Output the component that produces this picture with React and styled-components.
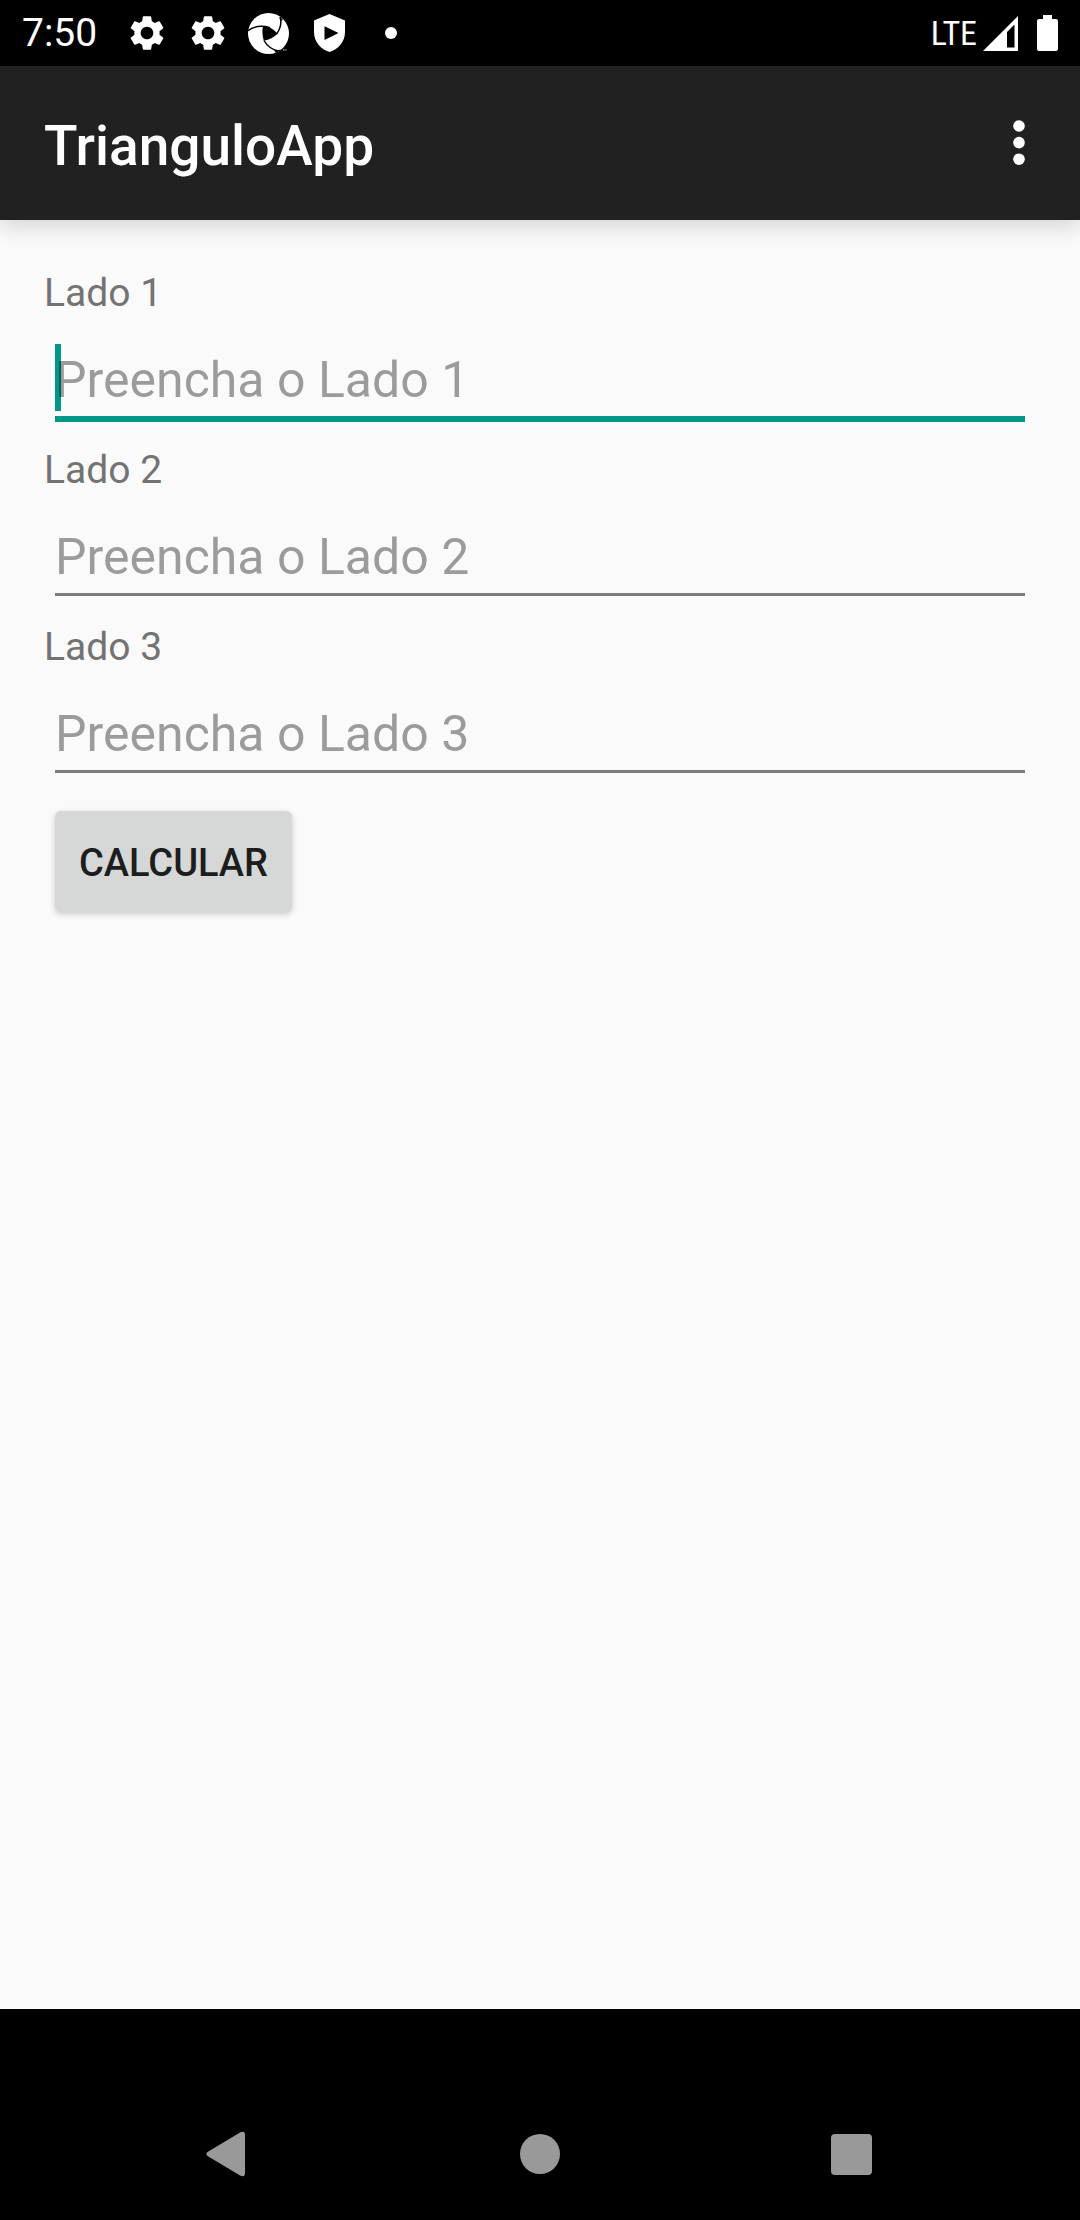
import React, { useState } from "react";
import styled, { createGlobalStyle } from "styled-components";
import { MdSettings } from "react-icons/md";

const GlobalStyle = createGlobalStyle`
  *, *::before, *::after { box-sizing: border-box; }
  body {
    margin: 0;
    background: #fafafa;
    font-family: Roboto, "Noto Sans", sans-serif;
  }
  button, input { font: inherit; }
`;

const Screen = styled.div`
  display: flex;
  flex-direction: column;
  min-height: 100vh;
`;

const StatusBar = styled.div`
  display: flex;
  align-items: center;
  justify-content: space-between;
  height: 66px;
  padding: 0 16px 0 22px;
  background: #000;
  color: #fff;
`;

const StatusGroup = styled.div`
  display: flex;
  align-items: center;
`;

const Clock = styled.time`
  margin-right: 19px;
  font-size: 39px;
  line-height: 68px;
`;

const StatusIcon = styled.span`
  display: flex;
  align-items: center;
  justify-content: center;
  width: 61px;
  height: 66px;
`;

const Network = styled.span`
  margin-right: 6px;
  font-family: "Roboto Condensed", "Liberation Sans Narrow", Roboto, sans-serif;
  font-size: 34px;
  line-height: 64px;
`;

const AppBar = styled.header`
  position: relative;
  display: flex;
  align-items: center;
  justify-content: space-between;
  height: 154px;
  padding: 0 22px 0 44px;
  background: #212121;
  color: #fff;
  box-shadow: 0 6px 22px rgba(0, 0, 0, 0.16);
`;

const Title = styled.h1`
  margin: 0;
  padding-top: 6px;
  font-size: 55px;
  font-weight: 500;
  line-height: 64px;
`;

const IconButton = styled.button`
  display: flex;
  align-items: center;
  justify-content: center;
  width: ${({ $width }) => $width}px;
  height: 132px;
  padding: 0;
  border: 0;
  background: transparent;
  color: inherit;
`;

const Form = styled.form`
  flex: 1;
  padding: 47px 44px;
`;

const Field = styled.div`
  height: 177px;
`;

const Label = styled.label`
  display: block;
  color: #737373;
  font-size: 39px;
  line-height: 52px;
`;

const InputBox = styled.div`
  position: relative;
  margin: 0 11px;
`;

const Caret = styled.span`
  position: absolute;
  top: 25px;
  left: 0;
  width: 6px;
  height: 67px;
  background: #009688;
`;

const Input = styled.input`
  position: relative;
  display: block;
  width: 100%;
  height: ${({ $active }) => ($active ? 103 : 100)}px;
  padding: 24px 0 0;
  border: 0;
  border-bottom: ${({ $active }) => ($active ? "6px solid #009688" : "3px solid #7c7c7c")};
  border-radius: 0;
  outline: 0;
  background: transparent;
  color: #212121;
  caret-color: transparent;
  font-size: 50px;
  line-height: 68px;

  &::placeholder {
    color: rgba(0, 0, 0, 0.38);
    opacity: 1;
  }
`;

const Submit = styled.button`
  height: 101px;
  margin: 13px 11px 0;
  padding: 2px 24px 0;
  border: 0;
  border-radius: 6px;
  background: #d6d7d7;
  box-shadow: 0 2px 6px rgba(0, 0, 0, 0.2);
  color: #1d1d1d;
  font-size: 38px;
  font-weight: 500;
  text-transform: uppercase;
`;

const NavBar = styled.nav`
  display: flex;
  justify-content: center;
  padding-top: 79px;
  background: #000;
  color: #999;
`;

const PinwheelIcon = () => (
  <svg width="41" height="41" viewBox="0 0 41 41" aria-hidden="true">
    <circle cx="20.5" cy="20.5" r="20.5" fill="#fff" />
    <path d="M15 13 Q23 13 29.7 20.7 Q24 26 15.8 27.8 Q13.5 20 15 13Z" />
    <path
      d="M32.2 4 Q34.5 13 28.5 21 M0 17.6 Q9 11 22 14.6 M16 27.5 Q20.5 35.5 30 38"
      fill="none"
      stroke="#000"
      strokeWidth="1.5"
    />
    <path d="M31 4.5 L35 6 L33.5 8Z M26 37.5 L33.5 36.5 L28 40Z" />
    <path d="M35 36.8h1.6M37.2 36.8h1.4" stroke="#aaa" strokeWidth="1.2" />
  </svg>
);

const ShieldIcon = () => (
  <svg width="31" height="38" viewBox="0 0 31 38" aria-hidden="true">
    <path
      fill="#fff"
      fillRule="evenodd"
      d="M15.5 0 L31 6.5 V18 C31 28 24 35.5 15.5 38 C7 35.5 0 28 0 18 V6.5Z M10.5 12.2 V26 L24.5 19Z"
    />
  </svg>
);

const DotIcon = () => (
  <svg width="12" height="12" viewBox="0 0 12 12" aria-hidden="true">
    <circle cx="6" cy="6" r="6" fill="#fff" />
  </svg>
);

const SignalIcon = () => (
  <svg width="35" height="35" viewBox="0 0 35 35" aria-hidden="true">
    <path fill="#fff" fillRule="evenodd" d="M35 0 V35 H0Z M31.5 8.5 L24 16 V31.5 H31.5Z" />
  </svg>
);

const BatteryIcon = () => (
  <svg width="21" height="36" viewBox="0 0 21 36" aria-hidden="true">
    <path
      fill="#fff"
      d="M6 0 H15 V4 H19 Q21 4 21 6 V34 Q21 36 19 36 H2 Q0 36 0 34 V6 Q0 4 2 4 H6Z"
    />
  </svg>
);

const BatterySlot = styled.span`
  display: flex;
  margin: 0 6px 0 19px;
`;

const OverflowIcon = () => (
  <svg width="12" height="46" viewBox="0 0 12 46" fill="currentColor" aria-hidden="true">
    <circle cx="6" cy="6" r="5.8" />
    <circle cx="6" cy="22.6" r="5.8" />
    <circle cx="6" cy="39.2" r="5.8" />
  </svg>
);

const BackIcon = () => (
  <svg width="44" height="46" viewBox="0 0 44 46" fill="currentColor" aria-hidden="true">
    <path d="M1.5 21 L34.5 1.2 Q39 -0.5 39 4 V42 Q39 46.5 34.5 44.8 L1.5 25 Q-0.8 23 1.5 21Z" />
  </svg>
);

const HomeIcon = () => (
  <svg width="40" height="40" viewBox="0 0 40 40" fill="currentColor" aria-hidden="true">
    <circle cx="20" cy="20" r="20" />
  </svg>
);

const RecentsIcon = () => (
  <svg width="42" height="42" viewBox="0 0 42 42" fill="currentColor" aria-hidden="true">
    <rect width="41" height="41" y="1" rx="4" />
  </svg>
);

function SideField({ number, active, onFocus }) {
  const [value, setValue] = useState("");
  const id = `lado-${number}`;
  return (
    <Field>
      <Label htmlFor={id}>Lado {number}</Label>
      <InputBox>
        {active && value === "" && <Caret />}
        <Input
          id={id}
          inputMode="decimal"
          placeholder={`Preencha o Lado ${number}`}
          value={value}
          $active={active}
          onChange={(event) => setValue(event.target.value)}
          onFocus={onFocus}
        />
      </InputBox>
    </Field>
  );
}

export default function App() {
  const [active, setActive] = useState(1);
  return (
    <Screen>
      <GlobalStyle />
      <StatusBar>
        <StatusGroup>
          <Clock>7:50</Clock>
          <StatusIcon><MdSettings size={42} /></StatusIcon>
          <StatusIcon><MdSettings size={42} /></StatusIcon>
          <StatusIcon><PinwheelIcon /></StatusIcon>
          <StatusIcon><ShieldIcon /></StatusIcon>
          <StatusIcon><DotIcon /></StatusIcon>
        </StatusGroup>
        <StatusGroup>
          <Network>LTE</Network>
          <SignalIcon />
          <BatterySlot><BatteryIcon /></BatterySlot>
        </StatusGroup>
      </StatusBar>
      <AppBar>
        <Title>TrianguloApp</Title>
        <IconButton $width={78} type="button" aria-label="Mais opções">
          <OverflowIcon />
        </IconButton>
      </AppBar>
      <Form onSubmit={(event) => event.preventDefault()}>
        {[1, 2, 3].map((number) => (
          <SideField
            key={number}
            number={number}
            active={active === number}
            onFocus={() => setActive(number)}
          />
        ))}
        <Submit type="submit">Calcular</Submit>
      </Form>
      <NavBar>
        <IconButton $width={312} type="button" aria-label="Voltar"><BackIcon /></IconButton>
        <IconButton $width={312} type="button" aria-label="Início"><HomeIcon /></IconButton>
        <IconButton $width={312} type="button" aria-label="Recentes"><RecentsIcon /></IconButton>
      </NavBar>
    </Screen>
  );
}
